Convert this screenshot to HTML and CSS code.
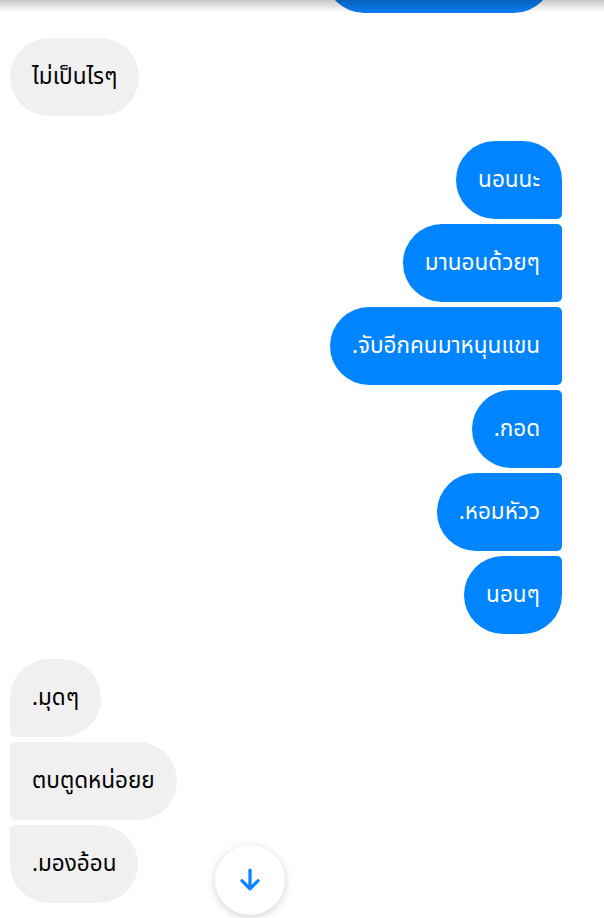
FILE: index.html
```html
<!DOCTYPE html>
<html lang="th">
<head>
    <meta charset="UTF-8">
    <meta name="viewport" content="width=device-width, initial-scale=1.0">
    <title>แชท</title>
    <link rel="stylesheet" href="styles.css">
</head>
<body>
    <div class="topShadow"></div>
    <div class="chat">
        <div class="group me">
            <div class="msg cut">&nbsp;</div>
        </div>
        <div class="group them">
            <div class="msg single">ไม่เป็นไรๆ</div>
        </div>
        <div class="group me">
            <div class="msg">นอนนะ</div>
            <div class="msg">มานอนด้วยๆ</div>
            <div class="msg">.จับอีกคนมาหนุนแขน</div>
            <div class="msg">.กอด</div>
            <div class="msg">.หอมหัวว</div>
            <div class="msg">นอนๆ</div>
        </div>
        <div class="group them">
            <div class="msg">.มุดๆ</div>
            <div class="msg">ตบตูดหน่อยย</div>
            <div class="msg">.มองอ้อน</div>
        </div>
    </div>
    <button class="scrollDown" type="button">
        <svg width="30" height="30" viewBox="0 0 24 24">
            <path d="M12 4v15M5.5 12.5L12 19l6.5-6.5" fill="none" stroke="#0a84ff" stroke-width="2.6" stroke-linecap="round" stroke-linejoin="round"/>
        </svg>
    </button>
</body>
</html>
```

FILE: styles.css
```css
body {
    margin: 0;
    padding: 0;
    background: #fff;
    font-family: "Noto Sans", "Noto Sans Thai", "Noto Sans CJK SC", sans-serif;
    overflow: hidden;
}
.topShadow {
    position: fixed;
    top: 0;
    left: 0;
    right: 0;
    height: 12px;
    background: linear-gradient(rgba(0,0,0,0.22), rgba(0,0,0,0));
    z-index: 2;
}
.chat {
    display: flex;
    flex-direction: column;
    gap: 25px;
    padding: 0 42px 0 10px;
    margin-top: -65px;
}
.group {
    display: flex;
    flex-direction: column;
    gap: 5px;
}
.group.me {
    align-items: flex-end;
}
.group.them {
    align-items: flex-start;
}
.msg {
    height: 78px;
    box-sizing: border-box;
    padding: 0 22px;
    display: flex;
    align-items: center;
    font-size: 22.5px;
    border-radius: 39px;
}
.me .msg {
    background: #0084ff;
    color: #fff;
    border-top-right-radius: 5px;
    border-bottom-right-radius: 5px;
}
.me .msg:first-child {
    border-top-right-radius: 39px;
}
.me .msg:last-child {
    border-bottom-right-radius: 39px;
}
.them .msg {
    background: #f0f0f0;
    color: #000;
    border-top-left-radius: 5px;
    border-bottom-left-radius: 5px;
}
.them .msg:first-child {
    border-top-left-radius: 39px;
}
.them .msg:last-child {
    border-bottom-left-radius: 39px;
}
.me .msg.cut {
    width: 228px;
    margin-right: 9px;
    background: #0a7cf0;
}
.scrollDown {
    position: fixed;
    left: 215px;
    top: 845px;
    width: 70px;
    height: 70px;
    border-radius: 50%;
    border: none;
    background: #fff;
    box-shadow: 0 2px 8px rgba(0,0,0,0.18);
    display: flex;
    align-items: center;
    justify-content: center;
    padding: 0;
}
```
